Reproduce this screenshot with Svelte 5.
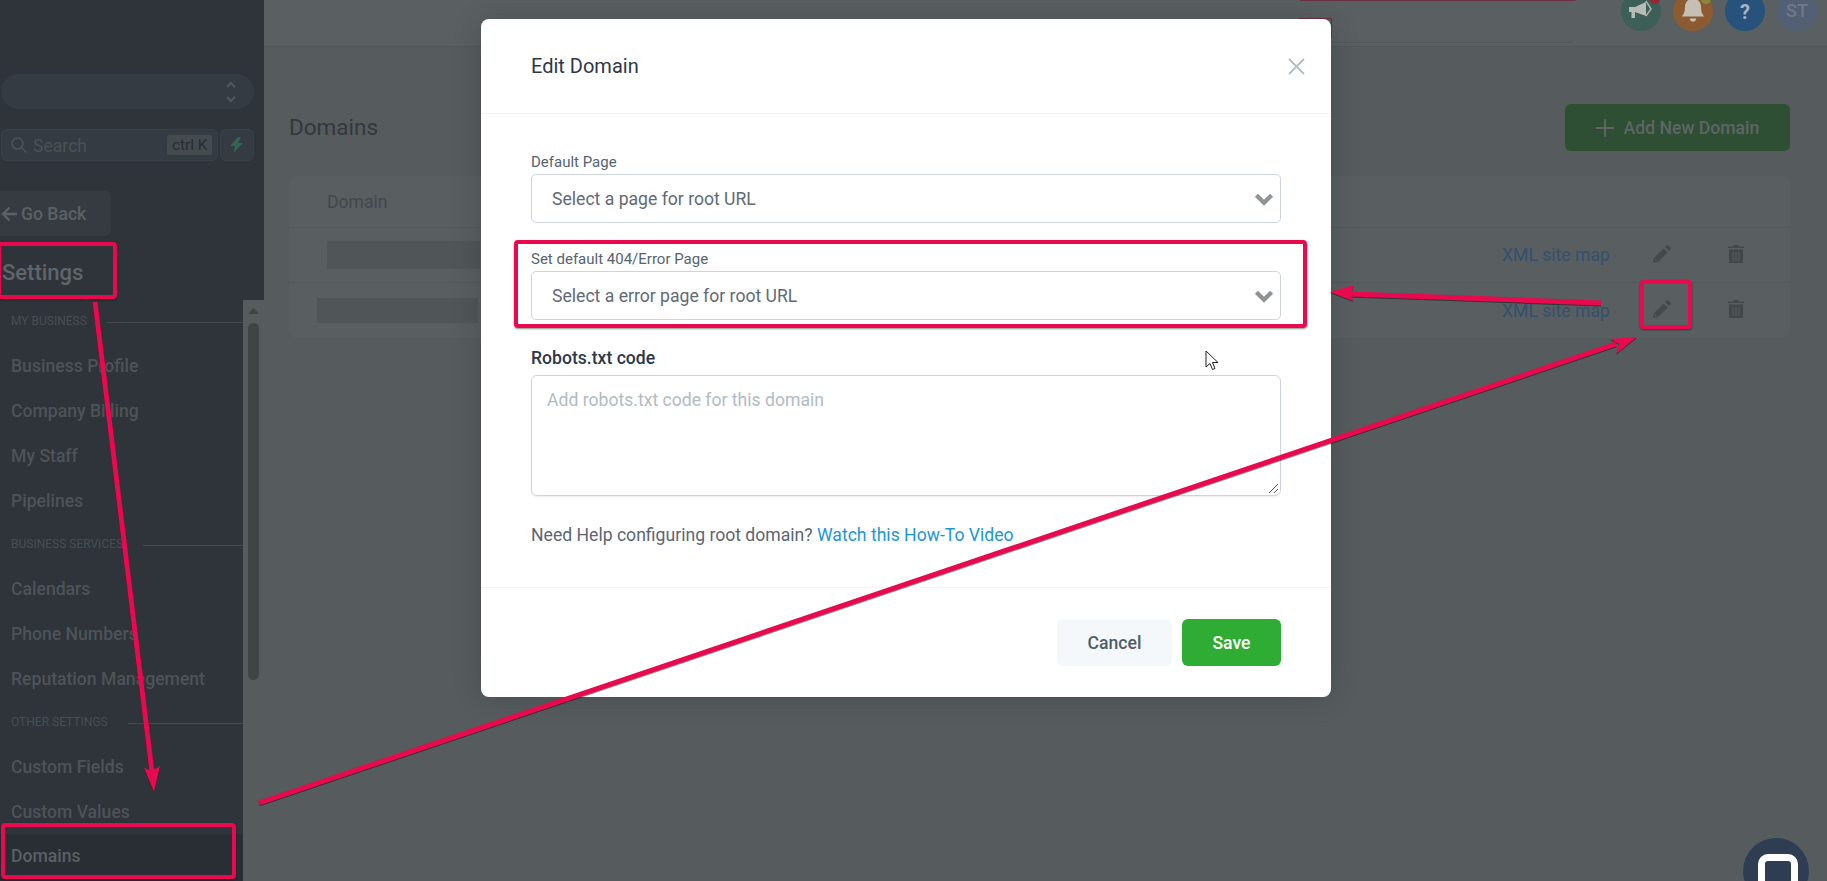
<script>
  const groups = [
    { title: 'MY BUSINESS', cls: 'first', items: ['Business Profile', 'Company Billing', 'My Staff', 'Pipelines'] },
    { title: 'BUSINESS SERVICES', cls: '', items: ['Calendars', 'Phone Numbers', 'Reputation Management'] },
    { title: 'OTHER SETTINGS', cls: '', items: ['Custom Fields', 'Custom Values', 'Domains'] }
  ];
  const rows = [{ id: 1 }, { id: 2 }];
</script>

<div class="page">
  <aside class="sidebar">
    <div class="side-top">
      <div class="location">
        <svg width="12" height="22" viewBox="0 0 12 22" fill="none" stroke="#53585c" stroke-width="2"><path d="M2 6l4-4 4 4M2 16l4 4 4-4"/></svg>
      </div>
      <div class="search-row">
        <div class="search">
          <svg width="18" height="18" viewBox="0 0 18 18" fill="none" stroke="#4c5257" stroke-width="1.6"><circle cx="7.5" cy="7.5" r="5.5"/><path d="M11.5 11.5l5 5"/></svg>
          <span class="search-text">Search</span>
          <span class="kbd">ctrl K</span>
        </div>
        <div class="bolt">
          <svg width="14" height="16" viewBox="0 0 14 16" fill="#2f6650"><path d="M8 0L0 9h5l-1.500 7L13 6H8l3-6z"/></svg>
        </div>
      </div>
      <div class="back"><span class="arrow">
        <svg width="17" height="16" viewBox="0 0 17 16" fill="none" stroke="#5b6165" stroke-width="2.400"><path d="M16 8H2M8.500 1.500L2 8l6.500 6.500"/></svg>
      </span>Go Back</div>
      <div class="settings">Settings</div>
    </div>
    <div class="side-scroll">
      <nav class="nav">
        {#each groups as g}
          <div class="group-title {g.cls}"><span>{g.title}</span><i></i></div>
          {#each g.items as item}
            <div class="item" class:active={item === 'Domains'}>{item}</div>
          {/each}
        {/each}
      </nav>
      <div class="scrollbar">
        <svg width="11" height="6" viewBox="0 0 11 6" fill="#3f4446"><path d="M5.500 0L11 6H0z"/></svg>
        <div class="thumb"></div>
      </div>
    </div>
  </aside>

  <main class="main">
    <header class="topbar">
      <div class="topbox"></div>
      <div class="behind"></div>
      <div class="circles">
        <div class="circle green">
          <svg width="26" height="22" viewBox="0 0 26 22"><path d="M1 7h6l11-5v14L7 12v6H3.500v-6H1z" fill="#b7bcb8"/><path d="M8 7.500L17 3.500v11L8 11" fill="#b7bcb8"/><path d="M18 1l5 8-5 7" fill="none" stroke="#a9b0ab" stroke-width="1.500"/></svg>
          <b class="dot red"></b>
        </div>
        <div class="circle orange">
          <svg width="24" height="28" viewBox="0 0 22 26" fill="#c6bfb3"><path d="M11 0c1.200 0 2 .8 2 2 4 .8 5.500 4 5.500 8 0 4 1 6 3 8H.5c2-2 3-4 3-8 0-4 1.500-7.200 5.500-8 0-1.200.8-2 2-2z"/><path d="M8 20h6c0 1.800-1.300 3-3 3s-3-1.200-3-3z"/></svg>
          <b class="dot yellow"></b>
        </div>
        <div class="circle blue">?</div>
        <div class="circle slate">ST</div>
      </div>
    </header>

    <section class="content">
      <div class="content-head">
        <h1>Domains</h1>
        <button class="add">
          <svg width="18" height="18" viewBox="0 0 18 18" stroke="#5f6567" stroke-width="2"><path d="M9 0v18M0 9h18"/></svg>
          Add New Domain
        </button>
      </div>
      <div class="table">
        <div class="thead"><span>Domain</span></div>
        {#each rows as r}
          <div class="tr r{r.id}">
            <div class="redact"></div>
            <a class="xml" href="#x">XML site map</a>
            <svg class="pen" width="18" height="18" viewBox="0 0 18 18" fill="#45494c"><path d="M0 18l1-5L10.500 3.500l4 4L5 17zM2 16l2-.5L2.500 14z" fill-rule="evenodd"/><path d="M12 2l1.500-1.500a1.500 1.500 0 0 1 2 0l2 2a1.500 1.500 0 0 1 0 2L16 6z"/></svg>
            <svg class="trash" width="16" height="18" viewBox="0 0 16 18" fill="#42474a"><path d="M5.500 0h5l.5 1.500h5V3H0V1.500h5z"/><path d="M1 4.500h14V18H1zM4.500 7v9H5.500V7zM7.500 7v9h1V7zM10.500 7v9h1V7z" fill-rule="evenodd"/></svg>
          </div>
        {/each}
      </div>
    </section>
  </main>

  <div class="chat"><i></i></div>

  <div class="modal">
    <div class="m-head">
      <h2>Edit Domain</h2>
      <svg width="17" height="17" viewBox="0 0 17 17" stroke="#b4bcc3" stroke-width="1.800"><path d="M1 1l15 15M16 1L1 16"/></svg>
    </div>
    <div class="m-body">
      <label class="lbl" for="s1">Default Page</label>
      <div class="select" id="s1">Select a page for root URL
        <svg width="20" height="13" viewBox="0 0 18 12" fill="none" stroke="#8f9396" stroke-width="4"><path d="M2 2l7 7 7-7"/></svg>
      </div>
      <label class="lbl second" for="s2">Set default 404/Error Page</label>
      <div class="select" id="s2">Select a error page for root URL
        <svg width="20" height="13" viewBox="0 0 18 12" fill="none" stroke="#8f9396" stroke-width="4"><path d="M2 2l7 7 7-7"/></svg>
      </div>
      <div class="robots-label">Robots.txt code</div>
      <div class="textarea">Add robots.txt code for this domain
        <svg class="grip" width="11" height="11" viewBox="0 0 11 11" stroke="#555" stroke-width="1"><path d="M1 10l9-9M6 10l4-4"/></svg>
      </div>
      <p class="help">Need Help configuring root domain? <a href="#v">Watch this How-To Video</a></p>
    </div>
    <div class="m-foot">
      <button class="cancel">Cancel</button>
      <button class="save">Save</button>
    </div>
  </div>

  <svg class="cursor" width="14" height="21" viewBox="0 0 14 21"><path d="M1 1v16l4-3.500 2.500 6 2.500-1-2.500-6H13z" fill="#fff" stroke="#222" stroke-width="1"/></svg>

  <div class="mark m-settings"></div>
  <div class="mark m-domains"></div>
  <div class="mark m-error"></div>
  <div class="mark m-pencil"></div>

  <svg class="arrows" width="1827" height="881" viewBox="0 0 1827 881">
    <g stroke="#e8094f" stroke-width="5" fill="#e8094f">
      <line x1="95" y1="302" x2="152" y2="772"/>
      <path d="M154 792l-10-24 8 3 8-5z" stroke="none"/>
      <line x1="259" y1="803" x2="1616" y2="344"/>
      <path d="M1637 337l-21 17 3-10-9-5z" stroke="none"/>
      <line x1="1601" y1="303" x2="1350" y2="294"/>
      <path d="M1330 292l24-7-3 9 2 7z" stroke="none"/>
    </g>
  </svg>
</div>

<style>
  :global(body) { margin: 0; font-family: Roboto, "Liberation Sans", sans-serif; }
  * { box-sizing: border-box; }
  .page { width: 1827px; height: 881px; display: flex; position: relative; overflow: hidden; background: #565b5e; }

  .sidebar { width: 264px; flex: none; display: flex; flex-direction: column; }
  .side-top { height: 300px; background: #2e343a; padding: 74px 10px 0 1px; }
  .location { height: 35px; border-radius: 18px; background: #353b42; display: flex; align-items: center; justify-content: flex-end; padding-right: 17px; }
  .search-row { display: flex; gap: 2px; margin-top: 20px; height: 32px; }
  .search { width: 218px; border-radius: 6px; background: #353b42; border: 1px solid #3a4047; display: flex; align-items: center; padding: 0 5px 0 8px; }
  .search-text { font-size: 17.6px; color: #4b5156; margin-left: 5px; flex: 1; padding-top: 2px; }
  .kbd { background: #454a4f; color: #282c31; font-size: 15.4px; border-radius: 2px; height: 20px; line-height: 20px; width: 45px; text-align: center; }
  .bolt { width: 34px; border-radius: 6px; background: #353b42; border: 1px solid #3a4047; display: flex; align-items: center; justify-content: center; }
  .back { margin: 30px 0 0 -1px; width: 111px; height: 45px; background: #363b42; border-radius: 0 6px 6px 0; color: #5b6165; font-size: 17.6px; font-weight: 500; display: flex; align-items: center; gap: 3px; }
  .arrow { display: flex; margin-left: 1px; }
  .settings { font-size: 22px; font-weight: 500; color: #5f656a; margin: 24px 0 0 1px; line-height: 26px; }

  .side-scroll { flex: 1; display: flex; min-height: 0; }
  .nav { width: 243px; background: #2e343a; padding-top: 13px; }
  .group-title { height: 16px; padding-left: 11px; display: flex; align-items: center; gap: 20px; font-size: 12px; color: #484e54; margin: 13px 0 0; }
  .group-title.first { margin-top: 0; }
  .group-title i { flex: 1; height: 1px; background: #464b51; position: relative; top: 1px; }
  .item { height: 45px; padding-left: 11px; display: flex; align-items: center; font-size: 17.6px; font-weight: 500; color: #4d5357; }
  .group-title + .item { margin-top: 14px; }
  .item.active { background: #292d34; color: #5a6064; height: 49px; padding-bottom: 6px; }
  .scrollbar { width: 21px; background: #565b5e; display: flex; flex-direction: column; align-items: center; padding-top: 8px; }
  .thumb { width: 11px; height: 357px; margin-top: 9px; background: #3f4446; border-radius: 6px; }

  .main { flex: 1; min-width: 0; }
  .topbar { height: 47px; background: #5a5f62; border-bottom: 1px solid #535759; position: relative; }
  .topbox { position: absolute; left: 1036px; top: 0; width: 276px; height: 43px; border-top: 1px solid #6b3042; border-bottom: 1px solid #53585b; border-right: 1px solid transparent; border-radius: 0 0 8px 0; }
  .behind { position: absolute; left: 1035px; top: 18px; width: 33px; height: 20px; border-top: 1px solid #6b3042; border-right: 1px solid #6b3042; }
  .circles { position: absolute; right: 10px; top: -9px; display: flex; gap: 12px; }
  .circle { width: 40px; height: 40px; border-radius: 50%; display: flex; align-items: center; justify-content: center; position: relative; color: #b6c1cc; font-size: 18px; line-height: 20px; font-weight: 700; }
  .green { background: #3d5f57; }
  .orange { background: #8d5b32; }
  .blue { background: #27527c; color: #a9b4bf; font-size: 20px; padding-top: 2px; }
  .slate { background: #525f75; color: #6f7a8b; font-weight: 500; }
  .dot { position: absolute; top: 3px; right: 1px; width: 10px; height: 10px; border-radius: 50%; }
  .red { background: #9c2335; }
  .yellow { background: #8a8a3e; right: 2px; }

  .content { padding: 57px 37px 0 25px; }
  .content-head { display: flex; align-items: center; justify-content: space-between; height: 47px; }
  h1 { margin: 0 0 2px; font-size: 22.5px; font-weight: 400; color: #33383d; }
  .add { width: 225px; height: 47px; background: #2e4f33; border: 0; border-radius: 6px; display: flex; align-items: center; justify-content: center; gap: 10px; color: #5f6567; font: 500 17.6px Roboto, sans-serif; }
  .table { margin-top: 25px; background: #595e61; border-radius: 8px; }
  .thead { height: 52px; display: flex; align-items: center; padding-left: 38px; font-size: 17.6px; color: #42474c; border-bottom: 1px solid #53585b; }
  .tr { height: 55px; display: flex; align-items: center; position: relative; padding-left: 38px; border-bottom: 1px solid #53585b; }
  .tr:last-child { border-bottom: 0; }
  .r2 { padding-left: 28px; }
  .redact { width: 153px; height: 28px; background: #505557; }
  .r2 .redact { width: 161px; height: 25px; }
  .xml { position: absolute; left: 1213px; font-size: 17.6px; color: #33506e; text-decoration: none; }
  .pen { position: absolute; left: 1364px; margin-top: -3px; }
  .trash { position: absolute; left: 1439px; margin-top: -3px; }

  .chat { position: absolute; left: 1743px; top: 838px; width: 66px; height: 66px; border-radius: 50%; background: #2f3d52; }
  .chat i { position: absolute; left: 15px; top: 16px; width: 40px; height: 36px; border: 7px solid #fff; border-radius: 10px; }

  .modal { position: absolute; left: 481px; top: 19px; width: 850px; height: 678px; background: #fff; border-radius: 8px; box-shadow: 0 0 30px rgba(0,0,0,.16); display: flex; flex-direction: column; }
  .m-head { height: 95px; flex: none; display: flex; align-items: center; justify-content: space-between; padding: 0 26px 0 50px; border-bottom: 1px solid #f1f5f8; }
  h2 { margin: 0; font-size: 20px; font-weight: 400; color: #2d3748; }
  .m-body { flex: 1; padding: 39px 50px 0 50px; }
  .lbl { display: block; font-size: 15px; line-height: 18px; color: #566370; height: 21px; }
  .second { margin-top: 27px; }
  .select { height: 49px; border: 1px solid #cfd4da; border-radius: 5px; display: flex; align-items: center; justify-content: space-between; padding: 0 0 0 20px; font-size: 17.6px; color: #5f6a75; }
  .select svg { margin: 2px 6px 0 0; }
  .robots-label { margin-top: 28px; font-size: 17.6px; font-weight: 500; color: #2d3748; line-height: 20px; }
  .textarea { margin-top: 7px; height: 121px; border: 1px solid #cfd4da; border-radius: 6px; padding: 14px 15px; font-size: 17.6px; line-height: 20px; color: #b2bbc2; position: relative; box-shadow: 0 1px 2px rgba(0,0,0,.08); }
  .grip { position: absolute; right: 1px; bottom: 1px; }
  .help { margin: 29px 0 0; font-size: 17.6px; line-height: 20px; color: #5a6672; }
  .help a { color: #1d96d8; text-decoration: none; }
  .m-foot { height: 110px; flex: none; border-top: 1px solid #f1f5f8; display: flex; justify-content: flex-end; align-items: flex-start; gap: 10px; padding: 31px 50px 0; }
  .m-foot button { font: 500 17.6px Roboto, sans-serif; border: 0; height: 47px; border-radius: 6px; }
  .cancel { width: 115px; background: #f5f8fa; color: #4f5d6b; }
  .save { width: 99px; background: #2fac33; color: #fff; }

  .cursor { position: absolute; left: 1205px; top: 350px; }
  .mark { position: absolute; border: 4px solid #e8094f; border-radius: 4px; box-shadow: 0 1px 2px rgba(0,0,0,.45); }
  .m-settings { left: -3px; top: 242px; width: 120px; height: 57px; }
  .m-domains { left: 1px; top: 823px; width: 235px; height: 56px; }
  .m-error { left: 514px; top: 240px; width: 793px; height: 88px; }
  .m-pencil { left: 1640px; top: 280px; width: 52px; height: 49px; }
  .arrows { position: absolute; left: 0; top: 0; pointer-events: none; filter: drop-shadow(0 1px 0 rgba(0,0,0,.45)); }
</style>
